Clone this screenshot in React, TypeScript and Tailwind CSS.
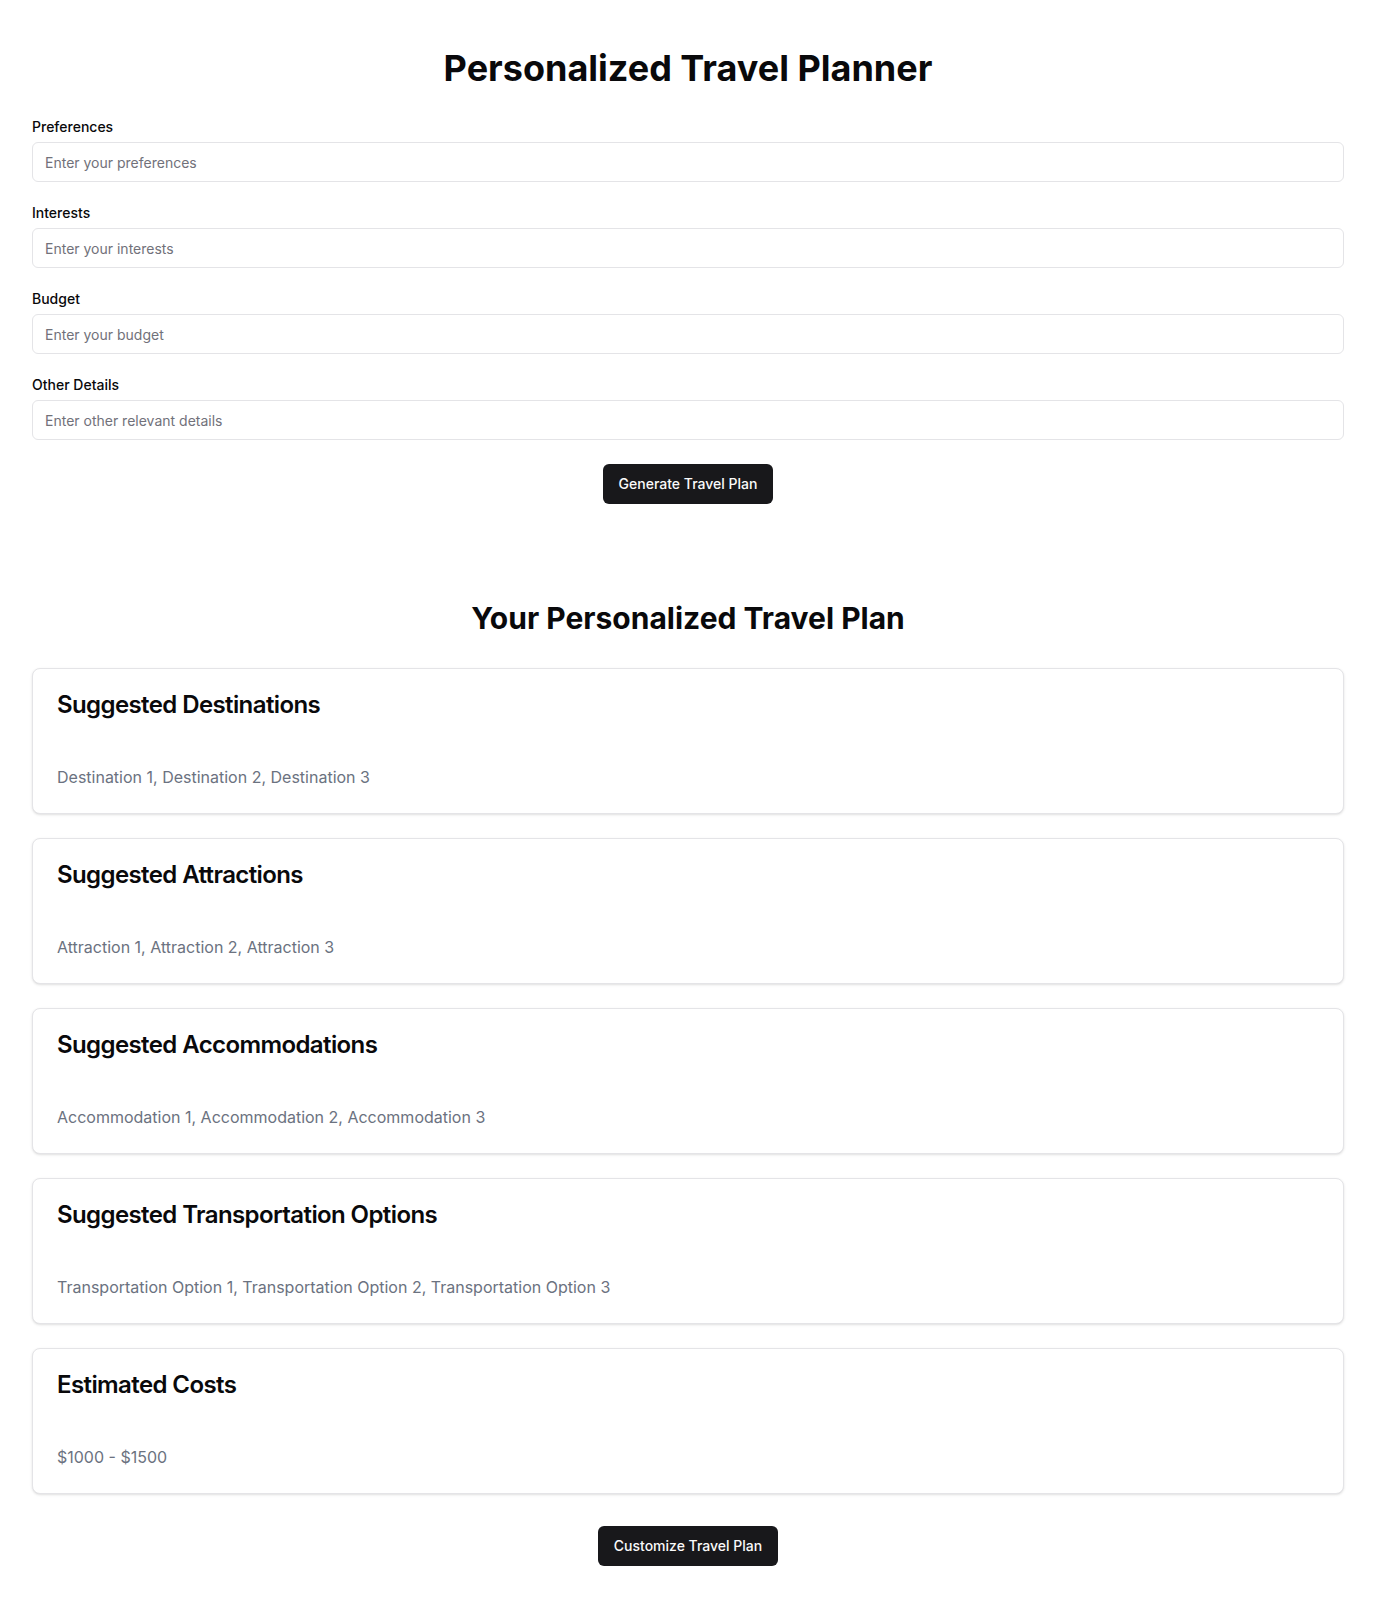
const FIELDS = [
  { id: 'preferences', label: 'Preferences', placeholder: 'Enter your preferences' },
  { id: 'interests', label: 'Interests', placeholder: 'Enter your interests' },
  { id: 'budget', label: 'Budget', placeholder: 'Enter your budget' },
  { id: 'details', label: 'Other Details', placeholder: 'Enter other relevant details' },
]

const RESULTS = [
  { title: 'Suggested Destinations', body: 'Destination 1, Destination 2, Destination 3' },
  { title: 'Suggested Attractions', body: 'Attraction 1, Attraction 2, Attraction 3' },
  { title: 'Suggested Accommodations', body: 'Accommodation 1, Accommodation 2, Accommodation 3' },
  { title: 'Suggested Transportation Options', body: 'Transportation Option 1, Transportation Option 2, Transportation Option 3' },
  { title: 'Estimated Costs', body: '$1000 - $1500' },
]

export default function App() {
  return (
    <div className="min-h-screen bg-white text-[#09090b] font-['Inter',sans-serif]">
      <div className="px-8 pt-12 pb-12">
        <h1 className="text-4xl font-bold text-center mb-8">Personalized Travel Planner</h1>

        <form className="space-y-6" onSubmit={(e) => e.preventDefault()}>
          {FIELDS.map((f) => (
            <div key={f.id}>
              <label htmlFor={f.id} className="block text-sm font-medium leading-none mb-2">
                {f.label}
              </label>
              <input
                id={f.id}
                placeholder={f.placeholder}
                className="flex h-10 w-full rounded-md border border-[#e4e4e7] bg-white px-3 py-2 text-sm placeholder:text-[#71717a] outline-none"
              />
            </div>
          ))}
          <div className="flex justify-center">
            <button
              type="submit"
              className="h-10 px-4 rounded-md bg-[#18181b] text-[#fafafa] text-sm font-medium"
            >
              Generate Travel Plan
            </button>
          </div>
        </form>

        <div className="mt-24">
          <h2 className="text-3xl font-bold text-center mb-8">Your Personalized Travel Plan</h2>
          <div className="space-y-6">
            {RESULTS.map((r) => (
              <div key={r.title} className="rounded-lg border border-[#e4e4e7] bg-white shadow-sm">
                <div className="flex flex-col space-y-1.5 p-6">
                  <h3 className="text-2xl font-semibold leading-none tracking-tight">{r.title}</h3>
                  <p className="h-[18px]" />
                </div>
                <div className="p-6 pt-0">
                  <p className="text-[#6b7280]">{r.body}</p>
                </div>
              </div>
            ))}
          </div>
          <div className="flex justify-center mt-8">
            <button className="h-10 px-4 rounded-md bg-[#18181b] text-[#fafafa] text-sm font-medium">
              Customize Travel Plan
            </button>
          </div>
        </div>
      </div>
    </div>
  )
}
